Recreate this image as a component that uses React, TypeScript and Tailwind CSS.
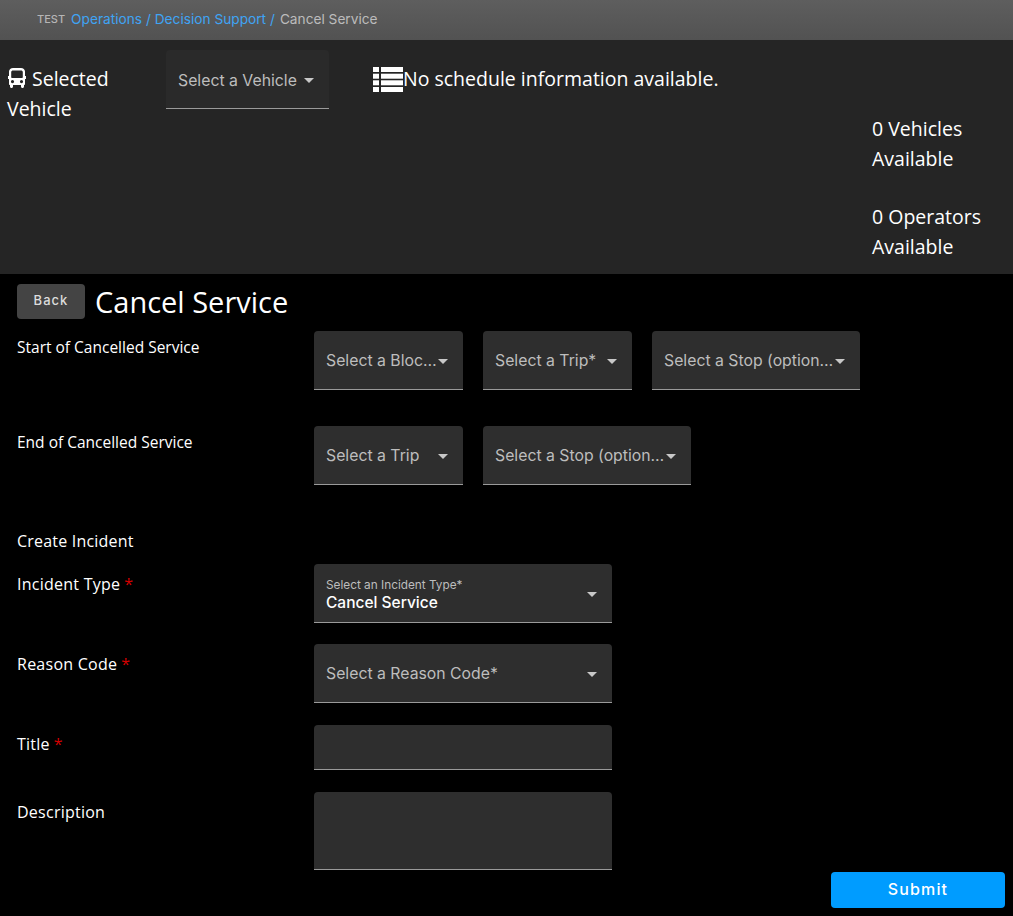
import type { ReactNode } from "react";

const uiFont = "font-['Inter','Roboto',sans-serif]";

function Caret() {
  return <span className="ml-auto h-0 w-0 shrink-0 border-x-[5.5px] border-t-[5px] border-x-transparent border-t-[#c8c8c8]"></span>;
}

function BusIcon() {
  return (
    <svg viewBox="0 0 18 20" className="ml-px mr-[6px] inline-block h-5 w-[18px] align-[-2px]" fill="#fff">
      <path fillRule="evenodd" d="M5 0h8c2.2 0 4 1.6 4 3.5V8h1v3h-1v5c0 .6-.4 1-1 1v1.5c0 .8-.6 1.5-1.5 1.5S13 19.300 13 18.500V17H5v1.500C5 19.300 4.400 20 3.500 20S2 19.300 2 18.500V17c-.6 0-1-.4-1-1v-5H0V8h1V3.500C1 1.600 2.800 0 5 0zM5 2.500c-1 0-1.800.6-1.800 1.500v5c0 .6.4 1 1 1h9.600c.6 0 1-.4 1-1V4c0-.9-.8-1.500-1.800-1.500H5zM4.500 12a1.600 1.600 0 1 0 0 3.200 1.600 1.600 0 0 0 0-3.200zM13.500 12a1.600 1.600 0 1 0 0 3.200 1.600 1.600 0 0 0 0-3.200z" />
    </svg>
  );
}

function ListIcon() {
  return (
    <svg viewBox="0 0 30 25" className="h-[25px] w-[30px] shrink-0" fill="#fff">
      <rect x="0" y="0" width="6" height="5" />
      <rect x="8" y="0" width="22" height="5" />
      <rect x="0" y="6.700" width="6" height="5" />
      <rect x="8" y="6.700" width="22" height="5" />
      <rect x="0" y="13.300" width="6" height="5" />
      <rect x="8" y="13.300" width="22" height="5" />
      <rect x="0" y="20" width="6" height="5" />
      <rect x="8" y="20" width="22" height="5" />
    </svg>
  );
}

function Select({ label, width, bg = "bg-[#2e2e2e]" }: { label: string; width: string; bg?: string }) {
  return (
    <div className={`${width} ${bg} ${uiFont} flex h-[59px] shrink-0 items-center rounded-t border-b border-[#9a9a9a] pl-3 pr-[15px] pt-[3px] text-[15.800px] text-[#bdbdbd]`}>
      <span className="min-w-0 truncate">{label}</span>
      <Caret />
    </div>
  );
}

function Row({ label, required, className, labelClass, children }: { label: string; required?: boolean; className?: string; labelClass?: string; children: ReactNode }) {
  return (
    <div className={`flex ${className ?? ""}`}>
      <div className={`w-[297px] shrink-0 leading-6 text-white ${labelClass ?? ""}`}>
        {label}
        {required && <span className="ml-[4px] text-[#d40000]">*</span>}
      </div>
      {children}
    </div>
  );
}

export default function App() {
  return (
    <div className="h-[916px] w-[1013px] overflow-hidden bg-black font-['Open_Sans','Noto_Sans',sans-serif] text-white">
      <div className={`${uiFont} flex h-10 items-center bg-gradient-to-b from-[#5e5e5e] to-[#525252] pb-[2px] pl-[37px] text-[13.700px] text-[#bcbcbc]`}>
        <span className="mr-[6px] text-[11px] font-medium text-[#b5b5b5]">TEST</span>
        <span className="text-[#3fa4f4]">Operations / Decision Support /</span>
        <span className="ml-[5px]">Cancel Service</span>
      </div>

      <div className="flex h-[234px] bg-[#252525] pl-[7px]">
        <div className="w-[159px] shrink-0 pt-6 text-[19.500px] leading-[30px]">
          <BusIcon />
          Selected Vehicle
        </div>
        <div className="pt-[10px]">
          <Select label="Select a Vehicle" width="w-[163px]" bg="bg-[#2a2a2a]" />
        </div>
        <div className="ml-11 flex h-fit flex-1 items-center pt-6 text-[19.500px] leading-[30px]">
          <ListIcon />
          No schedule information available.
        </div>
        <div className="w-[141px] shrink-0 pt-[74px] text-[19.500px] leading-[30px]">
          <div>0 Vehicles Available</div>
          <div className="mt-[28px]">0 Operators Available</div>
        </div>
      </div>

      <div className="pl-[17px]">
        <div className="flex items-center pt-[9.500px]">
          <button className={`${uiFont} h-[35px] w-[68px] rounded bg-[#444444] pb-px text-[13px] font-medium tracking-[0.08em] text-[#dcdcdc]`}>Back</button>
          <h1 className="ml-[10px] text-[29px] font-normal leading-9">Cancel Service</h1>
        </div>

        <Row label="Start of Cancelled Service" className="mt-[11px]" labelClass="pt-1 text-[15.500px]">
          <div className="flex gap-5">
            <Select label="Select a Block*" width="w-[149px]" />
            <Select label="Select a Trip*" width="w-[149px]" />
            <Select label="Select a Stop (optional)" width="w-[208px]" />
          </div>
        </Row>

        <Row label="End of Cancelled Service" className="mt-9" labelClass="pt-1 text-[15.500px]">
          <div className="flex gap-5">
            <Select label="Select a Trip" width="w-[149px]" />
            <Select label="Select a Stop (optional)" width="w-[208px]" />
          </div>
        </Row>

        <div className="mt-[44px] text-base leading-6 tracking-[0.2px]">Create Incident</div>

        <Row label="Incident Type" required className="mt-[11px]" labelClass="pt-2 text-base tracking-[0.25px]">
          <div className={`${uiFont} flex h-[59px] w-[298px] items-center rounded-t border-b border-[#9a9a9a] bg-[#2e2e2e] pl-3 pr-[15px] pt-1`}>
            <div>
              <div className="text-[11.800px] leading-4 text-[#bdbdbd]">Select an Incident Type*</div>
              <div className="text-[15.500px] font-medium leading-5 text-white">Cancel Service</div>
            </div>
            <Caret />
          </div>
        </Row>

        <Row label="Reason Code" required className="mt-[21px]" labelClass="pt-2 text-base tracking-[0.25px]">
          <Select label="Select a Reason Code*" width="w-[298px]" />
        </Row>

        <Row label="Title" required className="mt-[22px]" labelClass="pt-[7px] text-base tracking-[0.25px]">
          <div className="h-[45px] w-[298px] rounded-t border-b border-[#9a9a9a] bg-[#2e2e2e]"></div>
        </Row>

        <Row label="Description" className="mt-[22px]" labelClass="pt-2 text-base tracking-[0.25px]">
          <div className="h-[78px] w-[298px] rounded-t border-b border-[#9a9a9a] bg-[#2e2e2e]"></div>
        </Row>
      </div>

      <div className="flex justify-end pr-2 pt-[2px]">
        <button className={`${uiFont} h-9 w-[174px] rounded bg-[#009cff] pb-px text-base font-medium tracking-[0.07em] text-white`}>Submit</button>
      </div>
    </div>
  );
}
